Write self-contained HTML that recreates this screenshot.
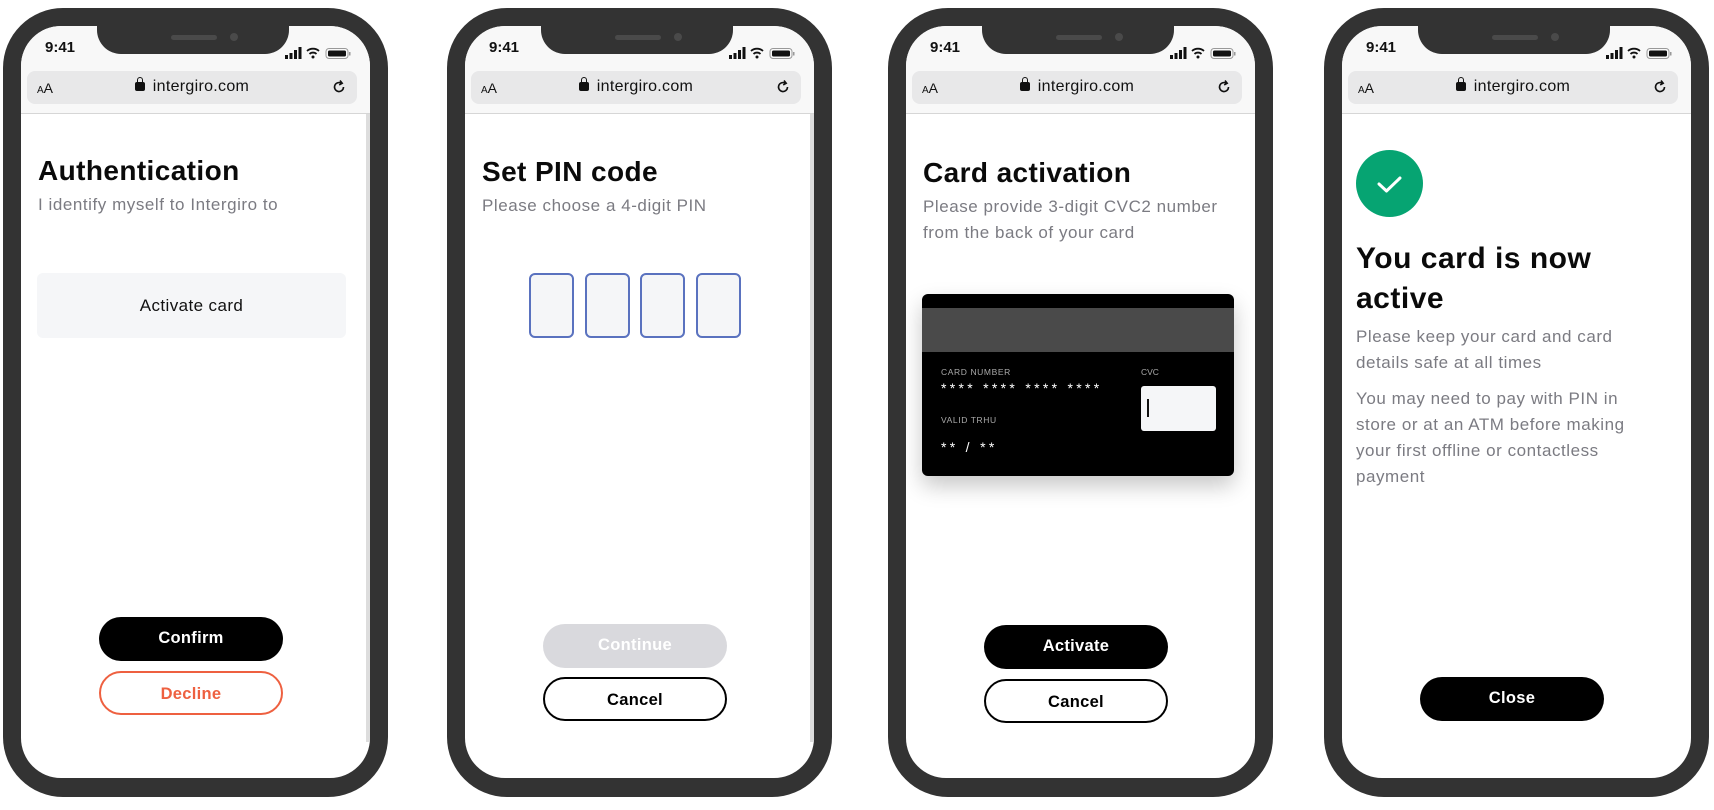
<!DOCTYPE html>
<html><head><meta charset="utf-8"><style>
*{margin:0;padding:0;box-sizing:border-box}
body{width:1714px;height:810px;background:#fff;position:relative;overflow:hidden;font-family:"Liberation Sans",sans-serif}
.ph{position:absolute;top:8px;width:385px;height:789px;background:#333;border-radius:60px}
.sc{position:absolute;left:18px;top:18px;width:349px;height:752px;background:#fff;border-radius:40px;overflow:hidden}
.top{position:absolute;left:0;top:0;width:100%;height:88px;background:#f8f8f8;border-bottom:1.5px solid #d6d6d6}
.notch{position:absolute;left:76px;top:0;width:192px;height:28px;background:#333;border-radius:0 0 24px 24px}
.spk{position:absolute;left:74px;top:9px;width:46px;height:5px;border-radius:3px;background:#4a4a4a}
.cam{position:absolute;left:133px;top:7px;width:8px;height:8px;border-radius:50%;background:#4a4a4a}
.time{position:absolute;left:24px;top:13px;font-size:15px;font-weight:bold;color:#111}
.url{position:absolute;left:6px;top:45px;width:330px;height:33px;background:#e8e8e9;border-radius:8px}
.aa{position:absolute;left:10px;top:9px;font-size:14px;color:#111}
.aa small{font-size:10px}
.dom{position:absolute;left:0;width:100%;top:7px;text-align:center;font-size:16px;color:#111;letter-spacing:.3px}
.lock{display:inline-block;width:10px;height:9px;background:#111;border-radius:2px;margin-right:8px;position:relative;top:0}
.lock:before{content:"";position:absolute;left:2px;top:-5px;width:6px;height:7px;border:1.6px solid #111;border-bottom:none;border-radius:4px 4px 0 0;box-sizing:border-box}
.ic{position:absolute;right:12px;top:14px}
.sb{position:absolute;right:0;top:88px;width:4px;height:628px;background:#ddd}
.t{position:absolute;left:17px;font-size:28px;font-weight:bold;color:#0a0a0a;letter-spacing:.4px}
.s{position:absolute;left:17px;font-size:17px;color:#7b7b82;line-height:26px;letter-spacing:.55px}
.btn{position:absolute;left:78px;width:184px;height:44px;border-radius:22px;text-align:center;line-height:42px;font-size:16.5px;font-weight:bold;letter-spacing:.3px}
.blk{background:#000;color:#fff}
.out{border:2px solid #000;color:#000;background:#fff}
.sig{position:absolute;left:264px;top:21px}
</style></head><body>

<div class="ph" style="left:3px">
 <div class="sc">
  <div class="top">
   <div class="time">9:41</div>
   <div class="url"><div class="aa"><small>A</small>A</div><div class="dom"><span class="lock"></span>intergiro.com</div>
    <svg class="ic" style="top:7px;right:9px" width="18" height="18" viewBox="0 0 18 18"><path d="M13.5 9a4.5 4.5 0 1 1-2-3.7" fill="none" stroke="#111" stroke-width="1.6"/><path d="M10 2.5l2.2 2.8-3 1.6" fill="none" stroke="#111" stroke-width="1.6"/></svg></div>
  </div>
  <div class="notch"><div class="spk"></div><div class="cam"></div></div>
  <svg class="sig" width="70" height="12" viewBox="0 0 70 12"><rect x="0" y="8" width="3" height="4" fill="#111"/><rect x="4.5" y="6" width="3" height="6" fill="#111"/><rect x="9" y="3" width="3" height="9" fill="#111"/><rect x="13.5" y="0" width="3" height="12" fill="#111"/><path d="M22 4a9 9 0 0 1 12 0M24.5 7a5 5 0 0 1 7 0" fill="none" stroke="#111" stroke-width="1.8"/><circle cx="28" cy="10" r="1.5" fill="#111"/><rect x="41" y="1.5" width="22" height="10" rx="3" fill="none" stroke="#999" stroke-width="1"/><rect x="43" y="3.5" width="18" height="6" rx="1.5" fill="#111"/><rect x="64" y="5" width="1.5" height="3.5" fill="#999"/></svg>
  <div class="sb"></div>
  <div class="t" style="top:129px">Authentication</div>
  <div class="s" style="top:166px">I identify myself to Intergiro to</div>
  <div style="position:absolute;left:16px;top:247px;width:309px;height:65px;background:#f5f6f8;border-radius:6px;text-align:center;line-height:65px;font-size:17px;color:#111;letter-spacing:.4px">Activate card</div>
  <div class="btn blk" style="top:591px">Confirm</div>
  <div class="btn" style="top:645px;border:2px solid #ee6040;color:#ee6040">Decline</div>
 </div>
</div>

<div class="ph" style="left:447px">
 <div class="sc">
  <div class="top">
   <div class="time">9:41</div>
   <div class="url"><div class="aa"><small>A</small>A</div><div class="dom"><span class="lock"></span>intergiro.com</div>
    <svg class="ic" style="top:7px;right:9px" width="18" height="18" viewBox="0 0 18 18"><path d="M13.5 9a4.5 4.5 0 1 1-2-3.7" fill="none" stroke="#111" stroke-width="1.6"/><path d="M10 2.5l2.2 2.8-3 1.6" fill="none" stroke="#111" stroke-width="1.6"/></svg></div>
  </div>
  <div class="notch"><div class="spk"></div><div class="cam"></div></div>
  <svg class="sig" width="70" height="12" viewBox="0 0 70 12"><rect x="0" y="8" width="3" height="4" fill="#111"/><rect x="4.5" y="6" width="3" height="6" fill="#111"/><rect x="9" y="3" width="3" height="9" fill="#111"/><rect x="13.5" y="0" width="3" height="12" fill="#111"/><path d="M22 4a9 9 0 0 1 12 0M24.5 7a5 5 0 0 1 7 0" fill="none" stroke="#111" stroke-width="1.8"/><circle cx="28" cy="10" r="1.5" fill="#111"/><rect x="41" y="1.5" width="22" height="10" rx="3" fill="none" stroke="#999" stroke-width="1"/><rect x="43" y="3.5" width="18" height="6" rx="1.5" fill="#111"/><rect x="64" y="5" width="1.5" height="3.5" fill="#999"/></svg>
  <div class="sb"></div>
  <div class="t" style="top:130px">Set PIN code</div>
  <div class="s" style="top:167px">Please choose a 4-digit PIN</div>
  <div style="position:absolute;left:64px;top:247px;width:45px;height:65px;border:2px solid #5a72bf;border-radius:6px;background:#f5f6f8"></div>
  <div style="position:absolute;left:119.5px;top:247px;width:45px;height:65px;border:2px solid #5a72bf;border-radius:6px;background:#f5f6f8"></div>
  <div style="position:absolute;left:175px;top:247px;width:45px;height:65px;border:2px solid #5a72bf;border-radius:6px;background:#f5f6f8"></div>
  <div style="position:absolute;left:230.5px;top:247px;width:45px;height:65px;border:2px solid #5a72bf;border-radius:6px;background:#f5f6f8"></div>
  <div class="btn" style="top:598px;background:#d9d9dd;color:#fff">Continue</div>
  <div class="btn out" style="top:651px">Cancel</div>
 </div>
</div>

<div class="ph" style="left:888px">
 <div class="sc">
  <div class="top">
   <div class="time">9:41</div>
   <div class="url"><div class="aa"><small>A</small>A</div><div class="dom"><span class="lock"></span>intergiro.com</div>
    <svg class="ic" style="top:7px;right:9px" width="18" height="18" viewBox="0 0 18 18"><path d="M13.5 9a4.5 4.5 0 1 1-2-3.7" fill="none" stroke="#111" stroke-width="1.6"/><path d="M10 2.5l2.2 2.8-3 1.6" fill="none" stroke="#111" stroke-width="1.6"/></svg></div>
  </div>
  <div class="notch"><div class="spk"></div><div class="cam"></div></div>
  <svg class="sig" width="70" height="12" viewBox="0 0 70 12"><rect x="0" y="8" width="3" height="4" fill="#111"/><rect x="4.5" y="6" width="3" height="6" fill="#111"/><rect x="9" y="3" width="3" height="9" fill="#111"/><rect x="13.5" y="0" width="3" height="12" fill="#111"/><path d="M22 4a9 9 0 0 1 12 0M24.5 7a5 5 0 0 1 7 0" fill="none" stroke="#111" stroke-width="1.8"/><circle cx="28" cy="10" r="1.5" fill="#111"/><rect x="41" y="1.5" width="22" height="10" rx="3" fill="none" stroke="#999" stroke-width="1"/><rect x="43" y="3.5" width="18" height="6" rx="1.5" fill="#111"/><rect x="64" y="5" width="1.5" height="3.5" fill="#999"/></svg>
  <div class="t" style="top:131px">Card activation</div>
  <div class="s" style="top:168px">Please provide 3-digit CVC2 number<br>from the back of your card</div>
  <div style="position:absolute;left:16px;top:268px;width:312px;height:182px;background:#000;border-radius:6px;box-shadow:0 10px 22px rgba(0,0,0,.22);overflow:hidden">
   <div style="position:absolute;left:0;top:14px;width:100%;height:44px;background:#4a4a4a"></div>
   <div style="position:absolute;left:19px;top:73px;font-size:8.5px;color:#aaa;letter-spacing:.6px">CARD NUMBER</div>
   <div style="position:absolute;left:19px;top:86px;font-size:14px;color:#fff;letter-spacing:3.3px">**** **** **** ****</div>
   <div style="position:absolute;left:19px;top:121px;font-size:8.5px;color:#aaa;letter-spacing:.6px">VALID TRHU</div>
   <div style="position:absolute;left:19px;top:145px;font-size:14px;color:#fff;letter-spacing:3.3px">** / **</div>
   <div style="position:absolute;left:219px;top:73px;font-size:8.5px;color:#aaa">CVC</div>
   <div style="position:absolute;left:219px;top:92px;width:75px;height:45px;background:#f5f6f8;border-radius:3px"><div style="position:absolute;left:6px;top:13px;width:1.5px;height:18px;background:#111"></div></div>
  </div>
  <div class="btn blk" style="top:599px">Activate</div>
  <div class="btn out" style="top:653px">Cancel</div>
 </div>
</div>

<div class="ph" style="left:1324px">
 <div class="sc">
  <div class="top">
   <div class="time">9:41</div>
   <div class="url"><div class="aa"><small>A</small>A</div><div class="dom"><span class="lock"></span>intergiro.com</div>
    <svg class="ic" style="top:7px;right:9px" width="18" height="18" viewBox="0 0 18 18"><path d="M13.5 9a4.5 4.5 0 1 1-2-3.7" fill="none" stroke="#111" stroke-width="1.6"/><path d="M10 2.5l2.2 2.8-3 1.6" fill="none" stroke="#111" stroke-width="1.6"/></svg></div>
  </div>
  <div class="notch"><div class="spk"></div><div class="cam"></div></div>
  <svg class="sig" width="70" height="12" viewBox="0 0 70 12"><rect x="0" y="8" width="3" height="4" fill="#111"/><rect x="4.5" y="6" width="3" height="6" fill="#111"/><rect x="9" y="3" width="3" height="9" fill="#111"/><rect x="13.5" y="0" width="3" height="12" fill="#111"/><path d="M22 4a9 9 0 0 1 12 0M24.5 7a5 5 0 0 1 7 0" fill="none" stroke="#111" stroke-width="1.8"/><circle cx="28" cy="10" r="1.5" fill="#111"/><rect x="41" y="1.5" width="22" height="10" rx="3" fill="none" stroke="#999" stroke-width="1"/><rect x="43" y="3.5" width="18" height="6" rx="1.5" fill="#111"/><rect x="64" y="5" width="1.5" height="3.5" fill="#999"/></svg>
  <svg style="position:absolute;left:14px;top:124px" width="67" height="67" viewBox="0 0 67 67"><circle cx="33.5" cy="33.5" r="33.5" fill="#06a472"/><path d="M23 34l7.5 7L44 28" fill="none" stroke="#fff" stroke-width="3" stroke-linecap="round" stroke-linejoin="round"/></svg>
  <div class="t" style="top:213px;left:14px;font-size:30px;line-height:40px;letter-spacing:.5px">You card is now<br>active</div>
  <div class="s" style="top:298px;left:14px">Please keep your card and card<br>details safe at all times</div>
  <div class="s" style="top:360px;left:14px">You may need to pay with PIN in<br>store or at an ATM before making<br>your first offline or contactless<br>payment</div>
  <div class="btn blk" style="top:651px">Close</div>
 </div>
</div>
</body></html>
